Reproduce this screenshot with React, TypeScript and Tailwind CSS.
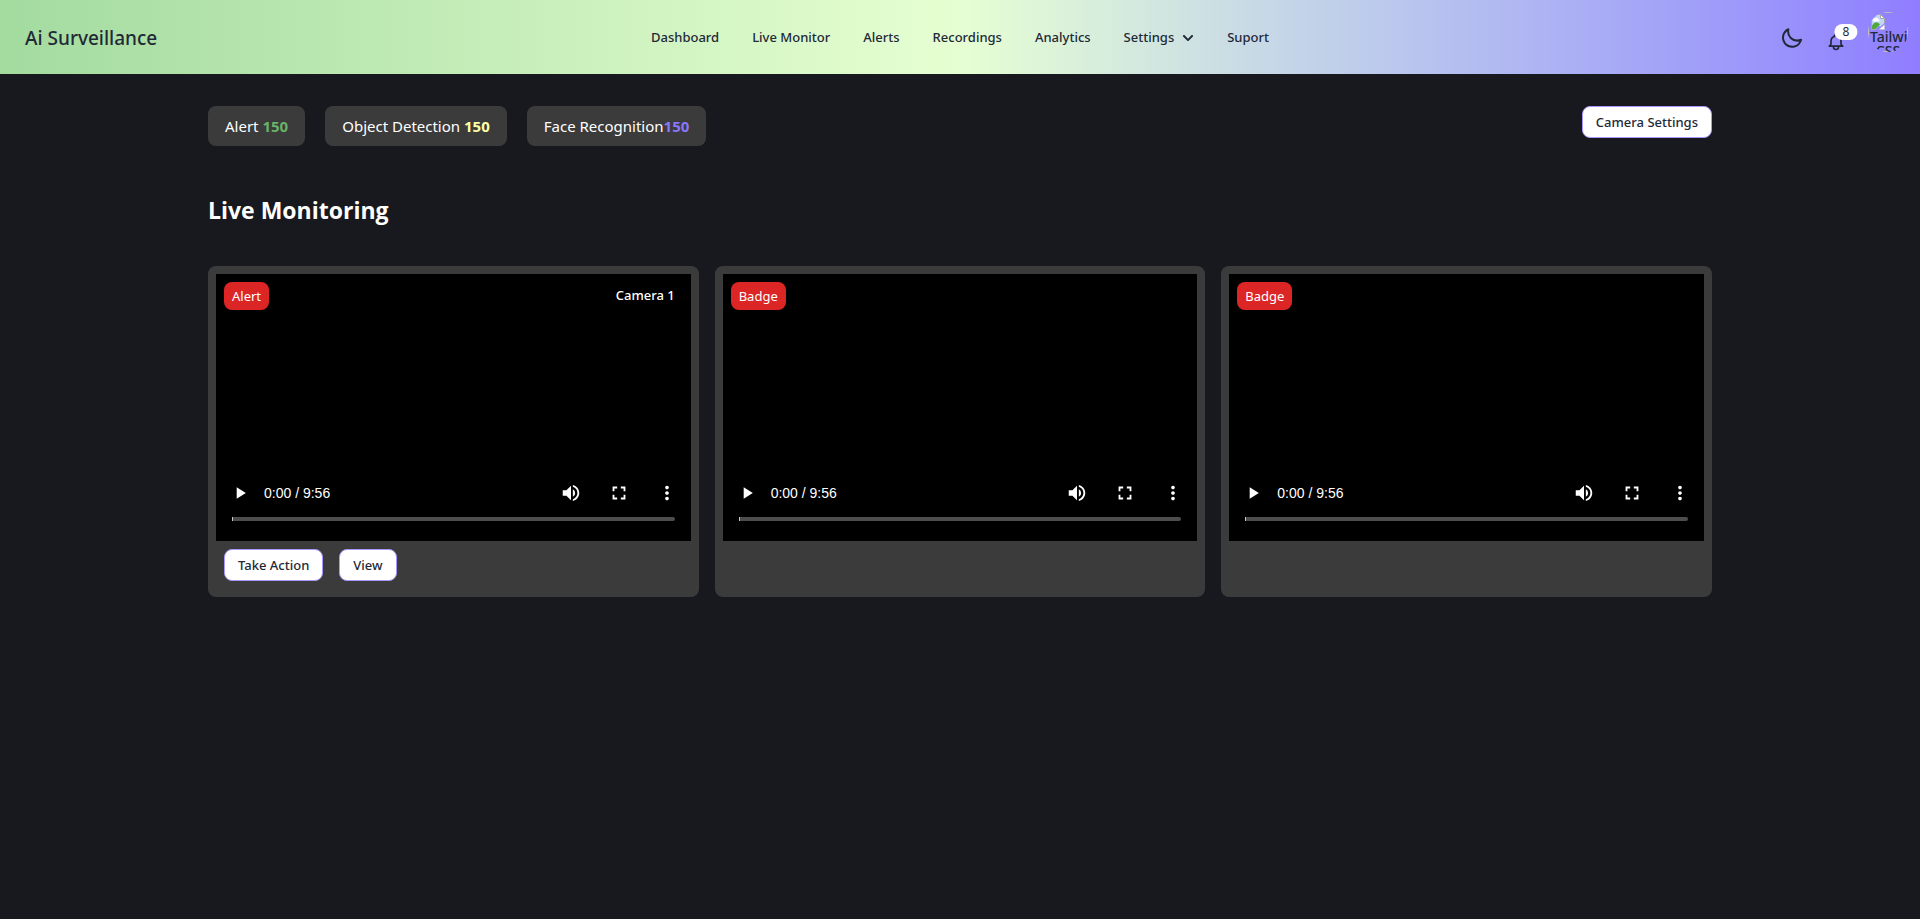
import type { ReactNode } from 'react'
import { FaChevronDown } from 'react-icons/fa'
import { MdFullscreen, MdMoreVert, MdPlayArrow, MdVolumeUp } from 'react-icons/md'

const navLinks = [
  { label: 'Dashboard' },
  { label: 'Live Monitor' },
  { label: 'Alerts' },
  { label: 'Recordings' },
  { label: 'Analytics' },
  { label: 'Settings', hasMenu: true },
  { label: 'Suport' },
]

interface Camera {
  id: number
  badge: string
  name?: string
  actions: string[]
}

const cameras: Camera[] = [
  { id: 1, badge: 'Alert', name: 'Camera 1', actions: ['Take Action', 'View'] },
  { id: 2, badge: 'Badge', actions: [] },
  { id: 3, badge: 'Badge', actions: [] },
]

function OutlineButton({ children }: { children: ReactNode }) {
  return (
    <button
      type="button"
      className="flex h-8 items-center rounded-lg border border-[#a996ff] bg-white px-[13px] pt-0.5 text-[13px] font-medium text-[#1f2937]"
    >
      {children}
    </button>
  )
}

function Avatar() {
  return (
    <button type="button" aria-label="Profile" className="h-10 w-10 overflow-hidden rounded-full">
      <span className="flex h-10 w-10 flex-col border border-[#c0c0c0] px-px pt-px">
        <svg className="h-4 w-4 shrink-0" viewBox="0 0 16 16" aria-hidden="true">
          <path d="M1.500.5h9l4 4V9l-4 3.500-2-.5-3 3.500h-4z" fill="#c3d6f8" />
          <path d="M3 6.500a1.500 1.500 0 0 1 2-2 2 2 0 0 1 3.500 1 1 1 0 0 1 0 2H4a1 1 0 0 1-1-1z" fill="#fff" />
          <path d="M2 15v-3c2-4 5-5 8-1.500L5.500 15z" fill="#4faa3b" />
          <path d="M10.500.5v4h4z" fill="#fff" />
          <path d="M14.500 9V4.500l-4-4h-9v15h4M10.500.5v4h4" fill="none" stroke="#a8a8a8" />
          <path d="M9 15.500l5.500-5v5z" fill="#fff" stroke="#b8b8b8" strokeWidth="0.500" />
        </svg>
        <span className="text-center text-sm leading-[14px] font-medium text-[#1f2937]">Tailwind CSS</span>
      </span>
    </button>
  )
}

function Navbar() {
  return (
    <header className="flex h-[74px] items-center justify-between bg-linear-to-r from-[#a3db9f] via-[#e6ffd2] to-[#8f7dff] px-3 pt-0.5 text-[#1f2937]">
      <div className="flex flex-1 items-center">
        <a href="#" className="px-[13px] text-[19px] font-medium">
          Ai Surveillance
        </a>
      </div>

      <nav className="flex items-center gap-[33px] text-[13px] font-medium">
        {navLinks.map((link) => (
          <a key={link.label} href="#" className="flex items-center gap-2">
            {link.label}
            {link.hasMenu && <FaChevronDown className="h-3 w-3" />}
          </a>
        ))}
      </nav>

      <div className="flex flex-1 items-end justify-end gap-[22px] self-start pt-2.5">
        <button type="button" aria-label="Toggle theme" className="pb-0.5">
          <svg className="h-6 w-6 fill-current" viewBox="0 0 24 24" aria-hidden="true">
            <path d="M21.640,13a1,1,0,0,0-1.050-.14,8.050,8.050,0,0,1-3.370.73A8.150,8.150,0,0,1,9.080,5.490a8.590,8.590,0,0,1,.25-2A1,1,0,0,0,8,2.360,10.140,10.140,0,1,0,22,14.050,1,1,0,0,0,21.640,13Zm-9.500,6.690A8.140,8.140,0,0,1,7.080,5.220v.27A10.150,10.150,0,0,0,17.220,15.630a9.790,9.790,0,0,0,2.100-.22A8.110,8.110,0,0,1,12.140,19.730Z" />
          </svg>
        </button>
        <button type="button" aria-label="Notifications" className="relative">
          <svg className="h-5 w-5" viewBox="0 0 24 24" fill="none" stroke="currentColor" strokeWidth="2" strokeLinecap="round" strokeLinejoin="round" aria-hidden="true">
            <path d="M15 17h5l-1.405-1.405A2.032 2.032 0 0118 14.158V11a6.002 6.002 0 00-4-5.659V5a2 2 0 10-4 0v.341C7.670 6.165 6 8.388 6 11v3.159c0 .538-.214 1.055-.595 1.436L4 17h5m6 0v1a3 3 0 11-6 0v-1m6 0H9" />
          </svg>
          <span className="absolute top-0 right-0 flex h-4 translate-x-1/2 -translate-y-1/2 items-center rounded-full bg-white px-2 text-xs">
            8
          </span>
        </button>
        <Avatar />
      </div>
    </header>
  )
}

function CameraCard({ camera }: { camera: Camera }) {
  return (
    <article className="rounded-lg bg-[#3b3b3b] p-2">
      <div className="flex aspect-video flex-col justify-between bg-black text-white">
        <div className="flex items-center justify-between p-2">
          <span className="rounded-lg bg-[#dc2626] px-2 py-1 text-[13px] leading-5">{camera.badge}</span>
          {camera.name && <span className="px-2 text-[13px] font-medium">{camera.name}</span>}
        </div>

        {/* Player controls */}
        <div className="pb-5">
          <div className="flex h-12 items-center pr-[13px] pl-3.5">
            <button type="button" aria-label="Play">
              <MdPlayArrow className="h-5 w-5" />
            </button>
            <span className="flex-1 pl-3.5 font-['Liberation_Sans',sans-serif] text-sm">0:00 / 9:56</span>
            <div className="flex items-center gap-[26px]">
              <button type="button" aria-label="Mute">
                <MdVolumeUp className="h-[22px] w-[22px]" />
              </button>
              <button type="button" aria-label="Fullscreen">
                <MdFullscreen className="h-[22px] w-[22px]" />
              </button>
              <button type="button" aria-label="More options">
                <MdMoreVert className="h-[22px] w-[22px]" />
              </button>
            </div>
          </div>
          <div className="px-4">
            <input
              type="range"
              min={0}
              max={596}
              defaultValue={0}
              aria-label="Seek"
              className="block h-1 w-full appearance-none rounded-sm bg-[#4d4d4d] [&::-webkit-slider-thumb]:h-1 [&::-webkit-slider-thumb]:w-px [&::-webkit-slider-thumb]:appearance-none [&::-webkit-slider-thumb]:bg-[#cccccc]"
            />
          </div>
        </div>
      </div>

      {camera.actions.length > 0 && (
        <div className="flex gap-4 p-2">
          {camera.actions.map((action) => (
            <OutlineButton key={action}>{action}</OutlineButton>
          ))}
        </div>
      )}
    </article>
  )
}

export default function App() {
  return (
    <div className="min-h-screen bg-[#18191e] font-['Noto_Sans','Open_Sans',sans-serif] text-white">
      <Navbar />

      <main className="mx-auto max-w-[1536px] px-4 py-8">
        <div className="flex items-start justify-between">
          <div className="flex gap-5 text-[15px] leading-6">
            <div className="rounded-lg bg-[#3b3b3b] px-[17px] py-2">
              Alert <span className="font-bold text-[#69b267]">150</span>
            </div>
            <div className="rounded-lg bg-[#3b3b3b] px-[17px] py-2">
              Object Detection <span className="font-bold text-[#fdffa5]">150</span>
            </div>
            <div className="rounded-lg bg-[#3b3b3b] px-[17px] py-2">
              Face Recognition<span className="font-bold text-[#8876fc]">150</span>
            </div>
          </div>
          <OutlineButton>Camera Settings</OutlineButton>
        </div>

        <h1 className="pt-12 pb-10 font-['Open_Sans',sans-serif] text-[23px] leading-8 font-bold">Live Monitoring</h1>

        <div className="grid grid-cols-3 gap-4">
          {cameras.map((camera) => (
            <CameraCard key={camera.id} camera={camera} />
          ))}
        </div>
      </main>
    </div>
  )
}
